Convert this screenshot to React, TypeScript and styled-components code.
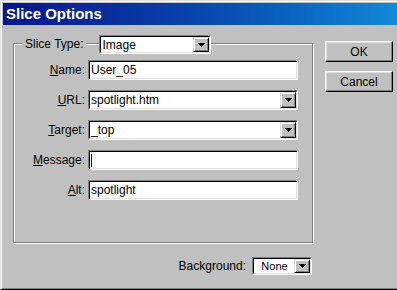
import React from "react";
import styled, { createGlobalStyle } from "styled-components";

const GlobalStyle = createGlobalStyle`
  html, body {
    margin: 0;
    padding: 0;
    background: #c0c0c0;
  }
  body {
    font-family: "Liberation Sans", Arial, sans-serif;
    font-size: 12px;
    color: #000;
  }
`;

const Window = styled.div`
  width: 397px;
  height: 290px;
  box-sizing: border-box;
  background: #c0c0c0;
  border-top: 1px solid #dfdfdf;
  border-left: 1px solid #dfdfdf;
  border-bottom: 1px solid #000;
  box-shadow: inset 1px 1px 0 #fff, inset 0 -1px 0 #808080;
  padding: 2px 0 0 2px;
  display: flex;
  flex-direction: column;
  overflow: hidden;
`;

const TitleBar = styled.div`
  height: 22px;
  line-height: 22px;
  padding-left: 3px;
  background: linear-gradient(90deg, #08168a 0%, #0840a8 45%, #0a66c2 75%, #1488d8 100%);
  color: #fff;
  font-weight: bold;
  font-size: 15px;
`;

const Body = styled.div`
  display: flex;
  align-items: flex-start;
  padding: 18px 4px 0 10px;
`;

const MainColumn = styled.div`
  display: flex;
  flex-direction: column;
`;

const GroupBox = styled.div`
  width: 300px;
  box-sizing: border-box;
  border: 1px solid #808080;
  box-shadow: inset 1px 1px 0 #fff, 1px 1px 0 #fff;
  padding: 0 13px 42px 8px;
  display: flex;
  flex-direction: column;
`;

const GroupHeader = styled.div`
  display: flex;
  align-items: center;
  height: 19px;
  margin-top: -9px;
  margin-bottom: 6px;
`;

const HeaderLabel = styled.span`
  background: #c0c0c0;
  padding: 0 3px;
  line-height: 19px;
  margin-right: 13px;
`;

const Fields = styled.div`
  display: flex;
  flex-direction: column;
  gap: 10px;
`;

const FieldRow = styled.div`
  display: flex;
  align-items: center;
  height: 20px;
`;

const FieldLabel = styled.span`
  width: 63px;
  text-align: right;
  margin-right: 3px;
`;

const TextBox = styled.div`
  width: 210px;
  height: 20px;
  box-sizing: border-box;
  background: #fff;
  border: 1px solid;
  border-color: #808080 #fff #fff #808080;
  box-shadow: inset 1px 1px 0 #000, inset -1px -1px 0 #dfdfdf;
  padding-left: 2px;
  display: flex;
  align-items: center;
`;

const Caret = styled.span`
  width: 1px;
  height: 13px;
  background: #000;
`;

const ComboBox = styled.div<{ $width: number; $height: number }>`
  width: ${(p) => p.$width}px;
  height: ${(p) => p.$height}px;
  box-sizing: border-box;
  border: 1px solid;
  border-color: #808080 #fff #fff #808080;
  display: flex;
`;

const ComboInner = styled.div`
  flex: 1;
  display: flex;
  background: #fff;
  border: 1px solid;
  border-color: #000 #dfdfdf #dfdfdf #000;
`;

const ComboValue = styled.span<{ $center?: boolean }>`
  flex: 1;
  display: flex;
  align-items: center;
  justify-content: ${(p) => (p.$center ? "center" : "flex-start")};
  padding-left: 1px;
  font-size: ${(p) => (p.$center ? "11px" : "12px")};
`;

const ArrowButton = styled.span`
  width: 16px;
  box-sizing: border-box;
  background: #c0c0c0;
  border: 1px solid;
  border-color: #dfdfdf #000 #000 #dfdfdf;
  box-shadow: inset 1px 1px 0 #fff, inset -1px -1px 0 #808080;
  display: flex;
  align-items: center;
  justify-content: center;
`;

const ButtonColumn = styled.div`
  display: flex;
  flex-direction: column;
  gap: 9px;
  margin-left: 12px;
  margin-top: -2px;
`;

const PushButton = styled.div`
  width: 68px;
  height: 21px;
  box-sizing: border-box;
  border: 1px solid;
  border-color: #fff #000 #000 #fff;
  box-shadow: inset -1px -1px 0 #808080, inset 1px 1px 0 #dfdfdf;
  display: flex;
  align-items: center;
  justify-content: center;
`;

const BackgroundRow = styled.div`
  display: flex;
  align-items: center;
  justify-content: flex-end;
  margin-top: 14px;
  padding-right: 1px;
`;

const BackgroundLabel = styled.span`
  margin-right: 6px;
`;

function Arrow() {
  return (
    <svg width="7" height="4" viewBox="0 0 7 4" shapeRendering="crispEdges">
      <path d="M0 0h7v1h-1v1h-1v1h-1v1h-1v-1h-1v-1h-1v-1h-1z" fill="#000" />
    </svg>
  );
}

function Combo({ value, width, height, center }: { value: string; width: number; height: number; center?: boolean }) {
  return (
    <ComboBox $width={width} $height={height}>
      <ComboInner>
        <ComboValue $center={center}>{value}</ComboValue>
        <ArrowButton>
          <Arrow />
        </ArrowButton>
      </ComboInner>
    </ComboBox>
  );
}

export default function App() {
  return (
    <>
      <GlobalStyle />
      <Window>
        <TitleBar>Slice Options</TitleBar>
        <Body>
          <MainColumn>
            <GroupBox>
              <GroupHeader>
                <HeaderLabel>Slice Type:</HeaderLabel>
                <Combo value="Image" width={112} height={19} />
              </GroupHeader>
              <Fields>
                <FieldRow>
                  <FieldLabel><u>N</u>ame:</FieldLabel>
                  <TextBox>User_05</TextBox>
                </FieldRow>
                <FieldRow>
                  <FieldLabel><u>U</u>RL:</FieldLabel>
                  <Combo value="spotlight.htm" width={210} height={20} />
                </FieldRow>
                <FieldRow>
                  <FieldLabel><u>T</u>arget:</FieldLabel>
                  <Combo value="_top" width={210} height={20} />
                </FieldRow>
                <FieldRow>
                  <FieldLabel><u>M</u>essage:</FieldLabel>
                  <TextBox><Caret /></TextBox>
                </FieldRow>
                <FieldRow>
                  <FieldLabel><u>A</u>lt:</FieldLabel>
                  <TextBox>spotlight</TextBox>
                </FieldRow>
              </Fields>
            </GroupBox>
            <BackgroundRow>
              <BackgroundLabel>Background:</BackgroundLabel>
              <Combo value="None" width={60} height={18} center />
            </BackgroundRow>
          </MainColumn>
          <ButtonColumn>
            <PushButton>OK</PushButton>
            <PushButton>Cancel</PushButton>
          </ButtonColumn>
        </Body>
      </Window>
    </>
  );
}
